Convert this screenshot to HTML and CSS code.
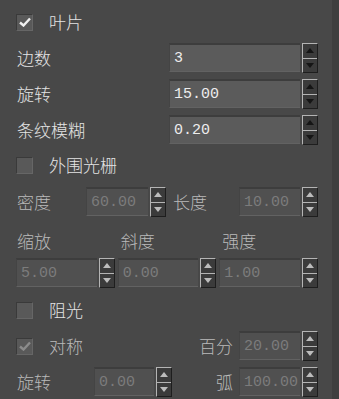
FILE: index.html
```html
<!DOCTYPE html>
<html lang="zh">
<head>
  <meta charset="UTF-8">
  <meta name="viewport" content="width=device-width, initial-scale=1.0">
  <title>叶片</title>
  <link rel="stylesheet" href="styles.css">
</head>
<body>
  <div class="panel">
    <!-- 叶片 -->
    <label class="check-row r-blade">
      <span class="checkbox on">
        <svg viewBox="0 0 12 10" width="12" height="10"><path d="M1 5.5 L4.5 8.5 L11 1.5" /></svg>
      </span>
      <span class="check-text">叶片</span>
    </label>

    <div class="field-row r-sides">
      <span class="label">边数</span>
      <div class="spin">
        <div class="field">3</div>
        <div class="spinner"><i class="up"></i><i class="down"></i></div>
      </div>
    </div>
    <div class="field-row r-gap">
      <span class="label">旋转</span>
      <div class="spin">
        <div class="field">15.00</div>
        <div class="spinner"><i class="up"></i><i class="down"></i></div>
      </div>
    </div>
    <div class="field-row r-gap">
      <span class="label">条纹模糊</span>
      <div class="spin">
        <div class="field">0.20</div>
        <div class="spinner"><i class="up"></i><i class="down"></i></div>
      </div>
    </div>

    <!-- 外围光栅 -->
    <label class="check-row r-grate">
      <span class="checkbox"></span>
      <span class="check-text">外围光栅</span>
    </label>

    <div class="pair-row r-density">
      <span class="label dim">密度</span>
      <div class="spin off">
        <div class="field">60.00</div>
        <div class="spinner"><i class="up"></i><i class="down"></i></div>
      </div>
      <span class="label dim second">长度</span>
      <div class="spin off">
        <div class="field">10.00</div>
        <div class="spinner"><i class="up"></i><i class="down"></i></div>
      </div>
    </div>

    <div class="tri-labels">
      <span class="label dim">缩放</span>
      <span class="label dim">斜度</span>
      <span class="label dim">强度</span>
    </div>
    <div class="tri-row">
      <div class="spin off">
        <div class="field">5.00</div>
        <div class="spinner"><i class="up"></i><i class="down"></i></div>
      </div>
      <div class="spin off">
        <div class="field">0.00</div>
        <div class="spinner"><i class="up"></i><i class="down"></i></div>
      </div>
      <div class="spin off">
        <div class="field">1.00</div>
        <div class="spinner"><i class="up"></i><i class="down"></i></div>
      </div>
    </div>

    <!-- 阻光 -->
    <label class="check-row r-block">
      <span class="checkbox"></span>
      <span class="check-text">阻光</span>
    </label>

    <div class="sym-row">
      <label class="check-row">
        <span class="checkbox on off">
          <svg viewBox="0 0 12 10" width="12" height="10"><path d="M1 5.5 L4.5 8.5 L11 1.5" /></svg>
        </span>
        <span class="check-text dim">对称</span>
      </label>
      <span class="label dim end">百分</span>
      <div class="spin off">
        <div class="field">20.00</div>
        <div class="spinner"><i class="up"></i><i class="down"></i></div>
      </div>
    </div>

    <div class="rot-row">
      <span class="label dim">旋转</span>
      <div class="spin off">
        <div class="field">0.00</div>
        <div class="spinner"><i class="up"></i><i class="down"></i></div>
      </div>
      <span class="label dim end">弧</span>
      <div class="spin off">
        <div class="field">100.00</div>
        <div class="spinner"><i class="up"></i><i class="down"></i></div>
      </div>
    </div>
  </div>
</body>
</html>
```

FILE: styles.css
```css
body {
  margin: 0;
  background-color: #3f3f3f;
  font-family: "Noto Sans CJK SC", "DejaVu Sans", sans-serif;
  font-weight: 300;
  color: #e4e4e4;
  overflow: hidden;
}

.panel {
  width: 332px;
  height: 399px;
  box-sizing: border-box;
  padding: 12px 14px 0 16px;
  background-color: #484848;
  display: flex;
  flex-direction: column;
}

.label {
  font-size: 17px;
  line-height: 20px;
  padding-left: 1px;
  white-space: nowrap;
}

.dim {
  color: #bababa;
}

/* checkbox rows */
.check-row {
  display: flex;
  align-items: center;
  height: 20px;
}

.checkbox {
  width: 17px;
  height: 17px;
  box-sizing: border-box;
  background-color: #595959;
  border-top: 1px solid #3a3a3a;
  border-left: 1px solid #3a3a3a;
  border-bottom: 1px solid #666;
  border-right: 1px solid #666;
  display: flex;
  align-items: center;
  justify-content: center;
}

.checkbox svg path {
  fill: none;
  stroke: #f0f0f0;
  stroke-width: 2.4;
}

.checkbox.off svg path {
  stroke: #8c8c8c;
}

.check-text {
  font-size: 17px;
  margin-left: 16px;
  line-height: 20px;
}

.r-blade { margin-top: 0; }
.r-grate { margin-top: 10px; }
.r-block { margin-top: 12px; }

/* spin fields */
.spin {
  display: flex;
  height: 30px;
}

.field {
  flex: 1;
  min-width: 0;
  height: 29px;
  box-sizing: border-box;
  background-color: #5b5b5b;
  border-top: 2px solid #3d3d3d;
  border-left: 1px solid #444;
  border-bottom: 1px solid #626262;
  padding-left: 4px;
  font-family: "Liberation Mono", "DejaVu Sans Mono", monospace;
  font-weight: 400;
  font-size: 15px;
  line-height: 27px;
  color: #ededed;
  overflow: hidden;
  white-space: nowrap;
}

.spin.off .field {
  background-color: #505050;
  color: #7c7c7c;
}

.spinner {
  width: 16px;
  margin-left: 2px;
  box-sizing: border-box;
  background-color: #3b3b3b;
  border-top: 1px solid #b4b4b4;
  border-left: 1px solid #b4b4b4;
  border-right: 1px solid #1e1e1e;
  border-bottom: 1px solid #1e1e1e;
  display: flex;
  flex-direction: column;
}

.spinner i {
  flex: 1;
  display: flex;
  align-items: center;
  justify-content: center;
}

.spinner i.down {
  border-top: 1px solid #b4b4b4;
}

.spinner i::after {
  content: "";
  width: 0;
  height: 0;
  border-left: 4px solid transparent;
  border-right: 4px solid transparent;
}

.spinner i.up::after {
  border-bottom: 5px solid #151515;
}

.spinner i.down::after {
  border-top: 5px solid #151515;
}

.spin.off .spinner i.up::after {
  border-bottom-color: #bcbcbc;
}

.spin.off .spinner i.down::after {
  border-top-color: #bcbcbc;
}

/* top rows */
.field-row {
  display: grid;
  grid-template-columns: 153px 1fr;
  align-items: center;
  height: 30px;
}

.r-sides { margin-top: 11px; }
.r-gap { margin-top: 6px; }

/* density / length */
.pair-row {
  display: grid;
  grid-template-columns: 70px 80px 73px 79px;
  align-items: center;
  height: 30px;
  margin-top: 12px;
}

.label.second {
  padding-left: 7px;
}

/* three columns */
.tri-labels,
.tri-row {
  display: grid;
  grid-template-columns: repeat(3, 1fr);
  column-gap: 3px;
}

.tri-labels {
  height: 20px;
  margin-top: 14px;
  align-items: center;
}

.tri-labels .label:nth-child(2),
.tri-labels .label:nth-child(3) {
  padding-left: 3px;
}

.tri-row {
  margin-top: 7px;
  height: 30px;
}

/* symmetry / percent */
.sym-row {
  display: grid;
  grid-template-columns: 150px 73px 79px;
  align-items: center;
  height: 30px;
  margin-top: 11px;
}

.label.end {
  text-align: right;
  padding-right: 6px;
}

.rot-row {
  display: grid;
  grid-template-columns: 78px 78px 67px 79px;
  align-items: center;
  height: 30px;
  margin-top: 6px;
}
```
